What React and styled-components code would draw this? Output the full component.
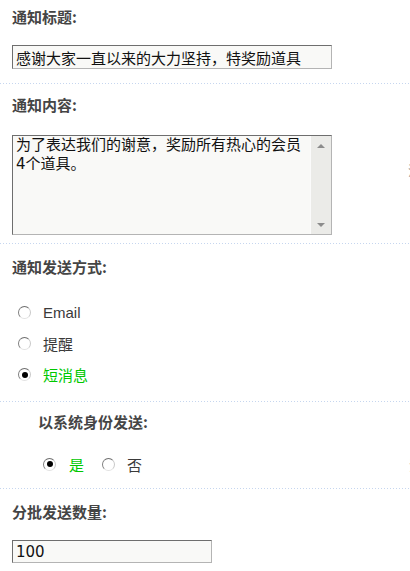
import React from "react";
import styled, { createGlobalStyle } from "styled-components";

const Global = createGlobalStyle`
  html, body { margin: 0; padding: 0; background: #fff; overflow: hidden; }
  body {
    font-family: "DejaVu Sans", "Noto Sans CJK SC", sans-serif;
    font-size: 15px;
    color: #333;
  }
`;

const Page = styled.div`
  width: 410px;
  display: flex;
  flex-direction: column;
`;

const Section = styled.section`
  padding: ${(p) => p.$pt}px 0 ${(p) => p.$pb}px ${(p) => p.$indent ?? 12}px;
`;

const Divider = styled.div`
  height: 1px;
  width: 100%;
  background-image: repeating-linear-gradient(
    to right,
    #c6d6ef 0 1px,
    transparent 1px 3px
  );
`;

const Label = styled.div`
  font-family: "Noto Sans CJK SC", sans-serif;
  font-size: 15px;
  font-weight: 700;
  line-height: 20px;
  color: #454545;
`;

const TextInput = styled.input`
  display: block;
  box-sizing: border-box;
  width: ${(p) => p.$w}px;
  height: ${(p) => p.$h}px;
  margin: ${(p) => p.$mt}px 0 0 0;
  padding: 0 3px;
  border: 1px solid;
  border-color: #6e6e6e #b4b4b4 #b4b4b4 #6e6e6e;
  background: #f9f9f7;
  font-family: "DejaVu Sans", "Noto Sans CJK SC", sans-serif;
  font-size: 15px;
  color: #111;
  outline: none;
`;

const AreaRow = styled.div`
  display: flex;
  align-items: flex-start;
  margin-top: 20px;
`;

const TextBox = styled.div`
  display: flex;
  box-sizing: border-box;
  width: 320px;
  height: 100px;
  border: 1px solid;
  border-color: #6e6e6e #b4b4b4 #b4b4b4 #6e6e6e;
  background: #f9f9f7;
  flex-shrink: 0;
`;

const Area = styled.textarea`
  flex: 1;
  margin: 0;
  border: none;
  background: transparent;
  resize: none;
  padding: 0 3px;
  font-family: "DejaVu Sans", "Noto Sans CJK SC", sans-serif;
  font-size: 15px;
  line-height: 19px;
  color: #111;
  overflow: hidden;
  outline: none;
`;

const ScrollTrack = styled.div`
  box-sizing: border-box;
  width: 21px;
  display: flex;
  flex-direction: column;
  justify-content: space-between;
  align-items: center;
  padding: 8px 0 7px;
  border-left: 1px solid #fbfbfb;
  background: #ebebe8;
`;

const Arrow = styled.span`
  width: 0;
  height: 0;
  border-left: 4px solid transparent;
  border-right: 4px solid transparent;
  ${(p) =>
    p.$up
      ? "border-bottom: 4px solid #8c8c8c;"
      : "border-top: 4px solid #8c8c8c;"}
`;

const Hint = styled.span`
  flex-shrink: 0;
  margin-left: ${(p) => p.$ml}px;
  margin-top: ${(p) => p.$mt || 0}px;
  font-family: "Noto Sans CJK SC", sans-serif;
  font-size: 13px;
  color: #8a8a8a;
  white-space: nowrap;
`;

const RadioList = styled.div`
  display: flex;
  flex-direction: column;
  margin-top: 20px;
  padding-left: 6px;
`;

const RadioInline = styled.div`
  display: flex;
  align-items: center;
  height: 30px;
  margin-top: 17px;
  padding-left: 5px;
`;

const RadioItem = styled.label`
  display: flex;
  align-items: center;
  gap: ${(p) => p.$gap ?? 12}px;
  height: ${(p) => p.$h ?? 31}px;
  margin-left: ${(p) => p.$ml || 0}px;
  font-family: "Liberation Sans", "Noto Sans CJK SC", sans-serif;
  font-size: 15px;
  color: ${(p) => (p.$on ? "#00c800" : "#3a3a3a")};
`;

const RadioDot = styled.span`
  box-sizing: border-box;
  width: 13px;
  height: 13px;
  border-radius: 50%;
  border: 1px solid;
  border-color: #6e6e6e #c8c8c8 #e2e2e2 #7e7e7e;
  background: #fff;
  display: flex;
  align-items: center;
  justify-content: center;
  flex-shrink: 0;
  &::after {
    content: "";
    width: 6px;
    height: 6px;
    border-radius: 50%;
    background: ${(p) => (p.$on ? "#000" : "transparent")};
  }
`;

export default function App() {
  return (
    <Page>
      <Global />
      <Section $pt={7} $pb={14}>
        <Label>通知标题:</Label>
        <TextInput
          $w={320}
          $h={24}
          $mt={18}
          readOnly
          value="感谢大家一直以来的大力坚持，特奖励道具"
        />
      </Section>
      <Divider />
      <Section $pt={11} $pb={8}>
        <Label>通知内容:</Label>
        <AreaRow>
          <TextBox>
            <Area
              readOnly
              value={"为了表达我们的谢意，奖励所有热心的会员\n4个道具。"}
            />
            <ScrollTrack>
              <Arrow $up />
              <Arrow />
            </ScrollTrack>
          </TextBox>
          <Hint $ml={76} $mt={25}>
            注：
          </Hint>
        </AreaRow>
      </Section>
      <Divider />
      <Section $pt={13} $pb={11}>
        <Label>通知发送方式:</Label>
        <RadioList>
          <RadioItem>
            <RadioDot />
            Email
          </RadioItem>
          <RadioItem>
            <RadioDot />
            提醒
          </RadioItem>
          <RadioItem $on>
            <RadioDot $on />
            短消息
          </RadioItem>
        </RadioList>
      </Section>
      <Divider />
      <Section $pt={10} $pb={9} $indent={38}>
        <Label>以系统身份发送:</Label>
        <RadioInline>
          <RadioItem $on $gap={13} $h={30}>
            <RadioDot $on />是
          </RadioItem>
          <RadioItem $gap={12} $h={30} $ml={18}>
            <RadioDot />否
          </RadioItem>
          <Hint $ml={267}>注：</Hint>
        </RadioInline>
      </Section>
      <Divider />
      <Section $pt={13} $pb={8}>
        <Label>分批发送数量:</Label>
        <TextInput $w={200} $h={23} $mt={18} readOnly value="100" />
      </Section>
    </Page>
  );
}
